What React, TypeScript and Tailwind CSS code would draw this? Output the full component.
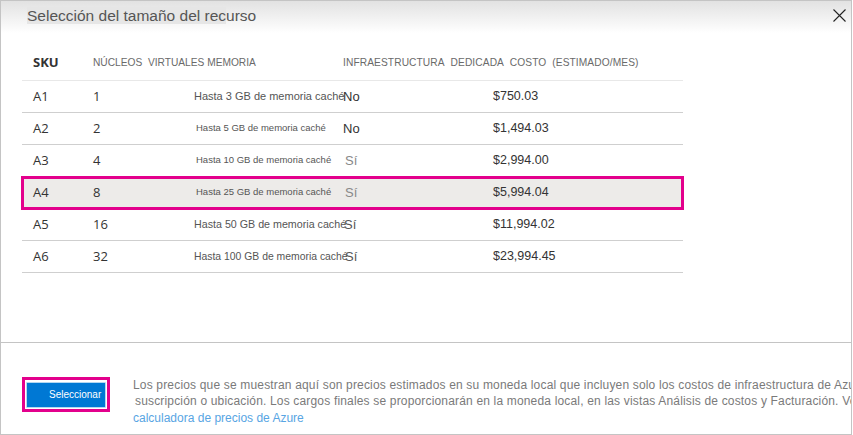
import React from 'react';

type Row = {
    sku: string;
    cores: string;
    memory: string;
    memClass: string;
    dedicated: string;
    dedClass: string;
    cost: string;
};

const rows: Row[] = [
    { sku: 'A1', cores: '1', memory: 'Hasta 3 GB de memoria caché', memClass: 'text-[11px] pl-0', dedicated: 'No', dedClass: 'text-[#333] pl-0', cost: '$750.03' },
    { sku: 'A2', cores: '2', memory: 'Hasta 5 GB de memoria caché', memClass: 'text-[9.5px] pl-[2px]', dedicated: 'No', dedClass: 'text-[#333] pl-0', cost: '$1,494.03' },
    { sku: 'A3', cores: '4', memory: 'Hasta 10 GB de memoria caché', memClass: 'text-[9.5px] pl-[2px]', dedicated: 'Sí', dedClass: 'text-[#888] pl-[2px]', cost: '$2,994.00' },
    { sku: 'A4', cores: '8', memory: 'Hasta 25 GB de memoria caché', memClass: 'text-[9.5px] pl-[2px]', dedicated: 'Sí', dedClass: 'text-[#888] pl-[2px]', cost: '$5,994.04' },
    { sku: 'A5', cores: '16', memory: 'Hasta 50 GB de memoria caché', memClass: 'text-[10.7px] pl-0', dedicated: 'Sí', dedClass: 'text-[#555] pl-[1px]', cost: '$11,994.02' },
    { sku: 'A6', cores: '32', memory: 'Hasta 100 GB de memoria caché', memClass: 'text-[10.4px] pl-0', dedicated: 'Sí', dedClass: 'text-[#555] pl-[2px]', cost: '$23,994.45' },
];

const App: React.FC = () => {
    return (
        <div className="w-[853px] h-[435px] bg-white overflow-hidden font-['Liberation_Sans',Arial,sans-serif]">
            <div className="w-[852px] h-[435px] flex flex-col border border-[#c4c4c4] bg-gradient-to-b from-[#e2e2e2] via-white via-[32px] to-white">
                {/* header */}
                <div className="h-[29px] flex items-center justify-between pl-[26px] pr-[5px] shrink-0">
                    <h1 className="text-[15.5px] text-[#555] leading-[20px] whitespace-nowrap">
                        <span className="bg-[#e6e6e6]">Selección del tamaño del rec</span>urso
                    </h1>
                    <button className="w-[14px] h-[14px] flex items-center justify-center text-[#222]" aria-label="Cerrar">
                        <svg width="13" height="13" viewBox="0 0 13 13" fill="none" stroke="currentColor" strokeWidth="1.1">
                            <path d="M0.5 0.5 L12.5 12.5 M12.5 0.5 L0.5 12.5" />
                        </svg>
                    </button>
                </div>

                {/* table */}
                <div className="flex-1 pl-[21px] pt-[17px]">
                    <div className="w-[661px]">
                        <div className="grid grid-cols-[71px_101px_149px_150px_190px] h-[34px] items-center border-b border-[#e8e8e8] pb-[2px]">
                            <div className="pl-[11px] text-[13px] font-bold text-[#333] font-['Open_Sans',sans-serif]">SKU</div>
                            <div className="col-span-2 text-[10.2px] text-[#6a6a6a] whitespace-nowrap">
                                NÚCLEOS&nbsp; VIRTUALES&nbsp;MEMORIA
                            </div>
                            <div className="col-span-2 text-[10.2px] text-[#6a6a6a] tracking-[0.1px] whitespace-nowrap">
                                INFRAESTRUCTURA&nbsp; DEDICADA&nbsp; COSTO&nbsp; (ESTIMADO/MES)
                            </div>
                        </div>
                        {rows.map(row => (
                            <div
                                key={row.sku}
                                className={`grid grid-cols-[71px_101px_149px_150px_190px] h-[32px] items-center border-b border-[#cfcfcf] ${
                                    row.sku === 'A4' ? 'bg-[#edebe9] outline-[3px] outline-solid outline-[#e3008c] -outline-offset-2' : ''
                                }`}
                            >
                                <div className="pl-[11px] text-[13px] text-[#333] font-['Open_Sans',sans-serif]">{row.sku}</div>
                                <div className="text-[13px] text-[#333] font-['Open_Sans',sans-serif]">{row.cores}</div>
                                <div className={`text-[#555] whitespace-nowrap ${row.memClass}`}>{row.memory}</div>
                                <div className={`text-[13px] ${row.dedClass}`}>{row.dedicated}</div>
                                <div className="text-[12.5px] text-[#333]">{row.cost}</div>
                            </div>
                        ))}
                    </div>
                </div>

                {/* footer */}
                <div className="h-[92px] shrink-0 border-t border-[#c4c4c4] flex items-start pt-[34px] pl-[21px]">
                    <div className="border-[3px] border-[#e3008c] p-px shrink-0">
                        <button className="w-[80px] h-[26px] bg-[#0078d4] border border-white/70 text-white text-[10px] pl-[22px] text-left leading-none rounded-[1px]">
                            Seleccionar
                        </button>
                    </div>
                    <div className="ml-[23px] text-[12px] leading-[16px] text-[#7a7a7a] whitespace-nowrap overflow-hidden min-w-0 flex-1">
                        <p className="tracking-[0.17px]">Los precios que se muestran aquí son precios estimados en su moneda local que incluyen solo los costos de infraestructura de Azure</p>
                        <p className="pl-[2px] tracking-[0.17px]">suscripción o ubicación. Los cargos finales se proporcionarán en la moneda local, en las vistas Análisis de costos y Facturación. Ver</p>
                        <a className="text-[#58a5e3] block mt-[1px]">calculadora de precios de Azure</a>
                    </div>
                </div>
            </div>
        </div>
    );
};

export default App;
